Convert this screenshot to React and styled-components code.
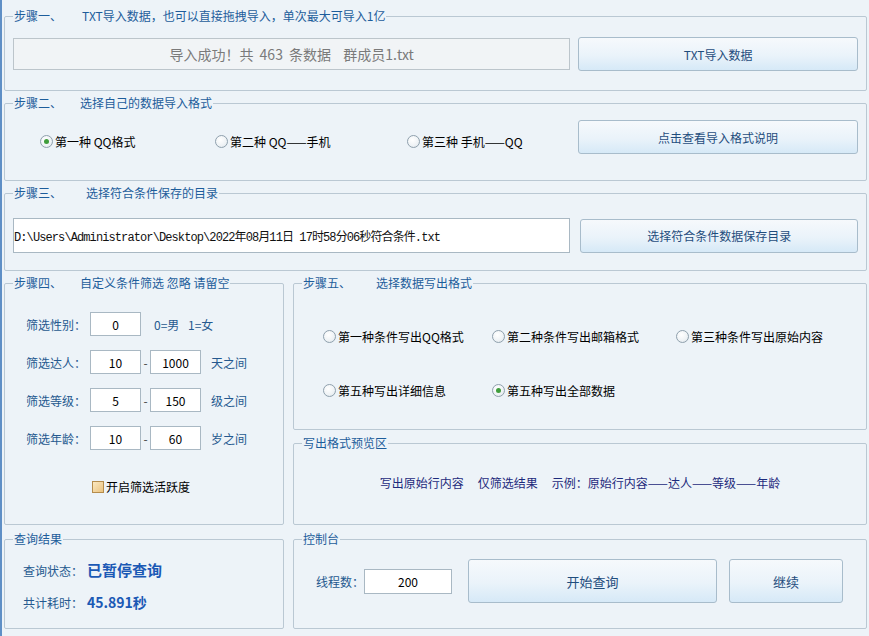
import React from 'react';
import styled, { createGlobalStyle } from 'styled-components';

const GlobalStyle = createGlobalStyle`
  html, body {
    margin: 0;
    padding: 0;
    background: #edf3f8;
  }
  body {
    font-family: "Noto Sans CJK SC", "Noto Sans", sans-serif;
    font-size: 12px;
    color: #000;
  }
`;

const Window = styled.div`
  width: 869px;
  height: 636px;
  box-sizing: border-box;
  border-left: 2px solid #5f8fc6;
  padding: 9px 2px 0 2px;
  display: flex;
  flex-direction: column;
  overflow: hidden;
`;

const Row = styled.div`
  display: flex;
  gap: 9px;
  margin-top: ${(p) => p.$mt || 0}px;
`;

const Column = styled.div`
  display: flex;
  flex-direction: column;
  gap: 6px;
`;

const Group = styled.fieldset`
  margin: ${(p) => p.$mt || 0}px 0 0 0;
  min-width: 0;
  box-sizing: border-box;
  width: ${(p) => (p.$w ? `${p.$w}px` : 'auto')};
  height: ${(p) => p.$h}px;
  border: 1px solid #bac8d3;
  border-radius: 2px;
  padding: ${(p) => p.$pt || 0}px 8px 0 8px;
`;

const Legend = styled.legend`
  font-size: 12px;
  line-height: 14px;
  color: #1d5d9b;
  padding: 0 1px;
  white-space: nowrap;
`;

const LegendTail = styled.span`
  margin-left: ${(p) => p.$gap}px;
`;

const Line = styled.div`
  display: flex;
  align-items: center;
  gap: ${(p) => p.$gap || 0}px;
`;

const Display = styled.div`
  width: 558px;
  height: 32px;
  box-sizing: border-box;
  border: 1px solid #bcc5cb;
  background: #f1f4f6;
  color: #7a7a7a;
  font-size: 14px;
  word-spacing: 3px;
  display: flex;
  align-items: center;
  justify-content: center;
  white-space: pre;
`;

const Button = styled.button`
  width: ${(p) => p.$w}px;
  height: ${(p) => p.$h}px;
  box-sizing: border-box;
  border: 1px solid #a8bccb;
  border-radius: 3px;
  background: linear-gradient(#f6f9fc 0%, #eaf3fa 55%, #d6e9f7 100%);
  color: #1f4d7d;
  font-family: inherit;
  font-size: ${(p) => p.$fs || 12}px;
  padding: 0;
  margin-left: ${(p) => p.$ml || 0}px;
  cursor: pointer;
`;

const PathInput = styled.input`
  width: 558px;
  height: 35px;
  box-sizing: border-box;
  border: 1px solid #a9b8c3;
  background: #fff;
  padding: 0;
  font-family: "Liberation Mono", "Noto Sans CJK SC", monospace;
  font-size: 12px;
  letter-spacing: -0.9px;
  color: #111;
  outline: none;
`;

const Box = styled.input`
  width: ${(p) => p.$w || 51}px;
  height: ${(p) => p.$h || 24}px;
  box-sizing: border-box;
  border: 1px solid #a9b8c3;
  background: #fff;
  padding: 0;
  text-align: center;
  font-family: inherit;
  font-size: 12px;
  color: #000;
  outline: none;
`;

const RadioGrid = styled.div`
  display: grid;
  grid-template-columns: ${(p) => p.$cols};
  row-gap: ${(p) => p.$rowGap || 0}px;
  padding-left: ${(p) => p.$pl}px;
  margin-top: ${(p) => p.$mt || 0}px;
  width: ${(p) => (p.$w ? `${p.$w}px` : 'auto')};
  box-sizing: border-box;
`;

const RadioItem = styled.label`
  display: flex;
  align-items: center;
  gap: 2px;
  height: 14px;
  white-space: nowrap;
  color: #000;
`;

const RadioDot = styled.span`
  width: 11px;
  height: 11px;
  border-radius: 50%;
  border: 1px solid #8fa0ad;
  background: radial-gradient(circle at 40% 35%, #ffffff 0%, #eef2f5 60%, #d9e1e7 100%);
  display: inline-flex;
  align-items: center;
  justify-content: center;
  flex: none;

  &::after {
    content: '';
    width: 5px;
    height: 5px;
    border-radius: 50%;
    background: #3f9d3c;
    display: ${(p) => (p.$on ? 'block' : 'none')};
  }
`;

const FilterList = styled.div`
  display: flex;
  flex-direction: column;
  gap: 14px;
  padding-left: 13px;
`;

const Label = styled.span`
  color: #25598f;
  width: ${(p) => (p.$w ? `${p.$w}px` : 'auto')};
  margin-left: ${(p) => p.$ml || 0}px;
  white-space: pre;
  word-spacing: ${(p) => p.$ws || 0}px;
  flex: none;
`;

const Dash = styled.span`
  width: 9px;
  text-align: center;
  color: #444;
`;

const CheckRow = styled.label`
  display: flex;
  align-items: center;
  gap: 2px;
  margin: 28px 0 0 79px;
  color: #000;
`;

const CheckBox = styled.span`
  width: 10px;
  height: 10px;
  border: 1px solid #b58c4c;
  background: linear-gradient(135deg, #fbe9c2, #eac27f);
  flex: none;
`;

const Preview = styled.div`
  display: flex;
  justify-content: center;
  gap: 14px;
  color: #1d2a7c;
  white-space: nowrap;
  line-height: 14px;
`;

const ResultList = styled.div`
  display: flex;
  flex-direction: column;
  gap: 12px;
  padding-left: 10px;
`;

const Strong = styled.span`
  color: #1b59b5;
  font-weight: 700;
  font-size: ${(p) => p.$fs}px;
  line-height: 20px;
  margin-left: 4px;
`;

const radios1 = [
  { text: '第一种 QQ格式', on: true },
  { text: '第二种 QQ——手机' },
  { text: '第三种 手机——QQ' },
];

const radios5 = [
  { text: '第一种条件写出QQ格式' },
  { text: '第二种条件写出邮箱格式' },
  { text: '第三种条件写出原始内容' },
  { text: '第五种写出详细信息' },
  { text: '第五种写出全部数据', on: true },
];

const filters = [
  { label: '筛选达人：', a: '10', b: '1000', unit: '天之间' },
  { label: '筛选等级：', a: '5', b: '150', unit: '级之间' },
  { label: '筛选年龄：', a: '10', b: '60', unit: '岁之间' },
];

const Radio = ({ text, on }) => (
  <RadioItem>
    <RadioDot $on={on} />
    {text}
  </RadioItem>
);

const App = () => {
  return (
    <>
      <GlobalStyle />
      <Window>
        <Group $h={82} $pt={14}>
          <Legend>
            步骤一、<LegendTail $gap={20}>TXT导入数据，也可以直接拖拽导入，单次最大可导入1亿</LegendTail>
          </Legend>
          <Line $gap={8}>
            <Display>导入成功！共 463 条数据  群成员1.txt</Display>
            <Button $w={280} $h={34}>TXT导入数据</Button>
          </Line>
        </Group>

        <Group $h={85} $pt={10} $mt={5}>
          <Legend>
            步骤二、<LegendTail $gap={18}>选择自己的数据导入格式</LegendTail>
          </Legend>
          <Line>
            <RadioGrid $cols="175px 192px 1fr" $pl={27} $w={565} $mt={9}>
              {radios1.map((r) => (
                <Radio key={r.text} {...r} />
              ))}
            </RadioGrid>
            <Button $w={280} $h={34}>点击查看导入格式说明</Button>
          </Line>
        </Group>

        <Group $h={85} $pt={18} $mt={5}>
          <Legend>
            步骤三、<LegendTail $gap={24}>选择符合条件保存的目录</LegendTail>
          </Legend>
          <Line $gap={10}>
            <PathInput readOnly value="D:\Users\Administrator\Desktop\2022年08月11日 17时58分06秒符合条件.txt" />
            <Button $w={278} $h={34}>选择符合条件数据保存目录</Button>
          </Line>
        </Group>

        <Row $mt={5}>
          <Group $w={280} $h={249} $pt={22}>
            <Legend>
              步骤四、<LegendTail $gap={18}>自定义条件筛选 忽略 请留空</LegendTail>
            </Legend>
            <FilterList>
              <Line>
                <Label $w={64}>筛选性别：</Label>
                <Box readOnly value="0" />
                <Label $ml={13} $ws={6}>0=男 1=女</Label>
              </Line>
              {filters.map((f) => (
                <Line key={f.label}>
                  <Label $w={64}>{f.label}</Label>
                  <Box readOnly value={f.a} />
                  <Dash>-</Dash>
                  <Box readOnly value={f.b} />
                  <Label $ml={10}>{f.unit}</Label>
                </Line>
              ))}
            </FilterList>
            <CheckRow>
              <CheckBox />
              开启筛选活跃度
            </CheckRow>
          </Group>

          <Column>
            <Group $w={574} $h={154} $pt={39}>
              <Legend>
                步骤五、<LegendTail $gap={25}>选择数据写出格式</LegendTail>
              </Legend>
              <RadioGrid $cols="169px 184px 1fr" $pl={21} $rowGap={40}>
                {radios5.map((r) => (
                  <Radio key={r.text} {...r} />
                ))}
              </RadioGrid>
            </Group>

            <Group $w={574} $h={89} $pt={26}>
              <Legend>写出格式预览区</Legend>
              <Preview>
                <span>写出原始行内容</span>
                <span>仅筛选结果</span>
                <span>示例：原始行内容——达人——等级——年龄</span>
              </Preview>
            </Group>
          </Column>
        </Row>

        <Row $mt={7}>
          <Group $w={280} $h={97} $pt={14}>
            <Legend>查询结果</Legend>
            <ResultList>
              <Line>
                <Label>查询状态：</Label>
                <Strong $fs={15}>已暂停查询</Strong>
              </Line>
              <Line>
                <Label>共计耗时：</Label>
                <Strong $fs={14}>45.891秒</Strong>
              </Line>
            </ResultList>
          </Group>

          <Group $w={574} $h={97} $pt={13}>
            <Legend>控制台</Legend>
            <Line>
              <Label $ml={14}>线程数：</Label>
              <Box readOnly value="200" $w={88} $h={25} />
              <Button $w={249} $h={44} $ml={16} $fs={13}>开始查询</Button>
              <Button $w={114} $h={44} $ml={12} $fs={13}>继续</Button>
            </Line>
          </Group>
        </Row>
      </Window>
    </>
  );
};

export default App;
